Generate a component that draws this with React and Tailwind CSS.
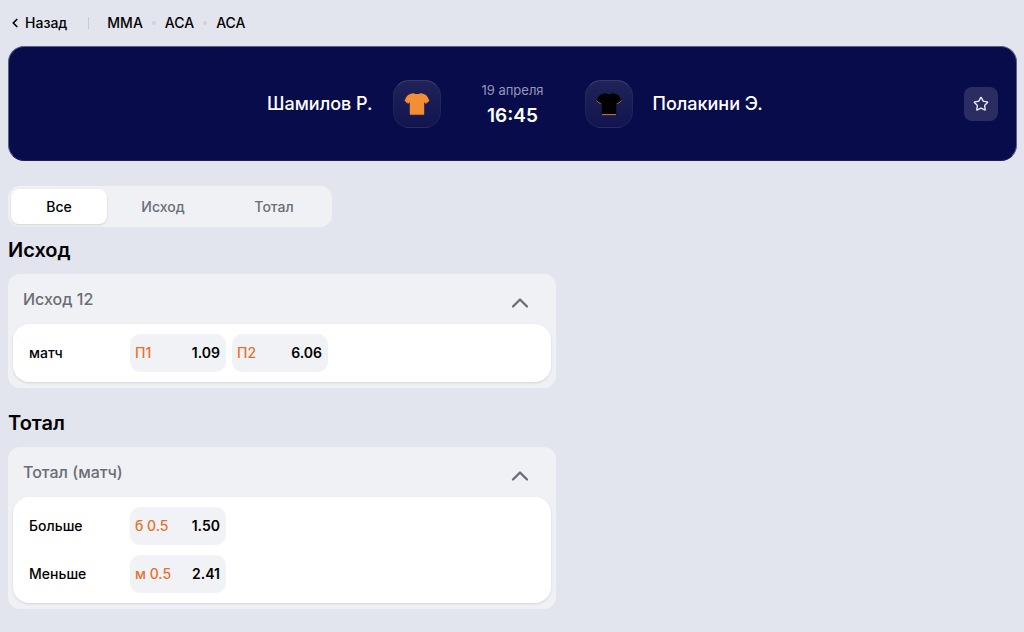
import { useState } from "react";
import { ChevronLeft, ChevronUp, Star } from "lucide-react";

const tabs = ["Все", "Исход", "Тотал"];

const crumbs = ["MMA", "ACA", "ACA"];

const markets = [
  {
    title: "Исход",
    name: "Исход 12",
    rows: [
      {
        label: "матч",
        odds: [
          { name: "П1", value: "1.09" },
          { name: "П2", value: "6.06" },
        ],
      },
    ],
  },
  {
    title: "Тотал",
    name: "Тотал (матч)",
    rows: [
      { label: "Больше", odds: [{ name: "б 0.5", value: "1.50" }] },
      { label: "Меньше", odds: [{ name: "м 0.5", value: "2.41" }] },
    ],
  },
];

function Shirt({ color, trim }) {
  return (
    <div className="flex size-12 shrink-0 items-center justify-center rounded-2xl border border-white/5 border-t-white/15 bg-gradient-to-b from-[#202259] to-[#12144f]">
      <svg viewBox="0 0 26 24" className="h-6 w-[26px]">
        <path
          d="M8.4 1.4C9.4 0.8 10.4 2 13 2C15.6 2 16.6 0.8 17.6 1.4C21.8 2.2 23.6 3.8 25.2 8.4C24.4 9.8 23 10.8 21.4 11.2L20.2 10.2V22.8H5.8V10.2L4.6 11.2C3 10.8 1.6 9.8 0.8 8.4C2.4 3.8 4.2 2.2 8.4 1.4Z"
          fill={color}
        />
        <path
          d="M0.8 8.6C1.6 10 3 11 4.6 11.4M25.2 8.6C24.4 10 23 11 21.4 11.4M6 22.6H20"
          fill="none"
          stroke={trim}
          strokeWidth="1"
        />
      </svg>
    </div>
  );
}

function Breadcrumbs() {
  return (
    <nav className="flex h-[46px] items-center text-sm font-medium text-black">
      <a href="#back" className="flex items-center gap-[3px]">
        <ChevronLeft className="size-3.5" strokeWidth={3} />
        Назад
      </a>
      <span className="mr-[18px] ml-[21px] h-3 w-px bg-[#c9cbd2]" />
      <div className="flex items-center gap-[9px]">
        {crumbs.map((crumb, idx) => (
          <div key={idx} className="flex items-center gap-[9px]">
            {idx > 0 && <span className="size-1 rounded-full bg-[#cfd2d9]" />}
            <a href="#league">{crumb}</a>
          </div>
        ))}
      </div>
    </nav>
  );
}

function MatchHeader() {
  return (
    <header className="grid h-[115px] grid-cols-[1fr_144px_1fr] items-center rounded-2xl border border-[#5d6183] border-b-[#1b1e58] bg-[#090c4b] text-white">
      <div className="flex items-center justify-end gap-5">
        <span className="text-lg font-medium">Шамилов Р.</span>
        <Shirt color="#f28f35" trim="#c46a1c" />
      </div>
      <div className="pt-1 text-center">
        <div className="text-[13px] leading-5 text-[#9496bb]">19 апреля</div>
        <div className="text-[19px] leading-8 font-semibold">16:45</div>
      </div>
      <div className="flex items-center gap-5 pr-[18px]">
        <Shirt color="#000000" trim="#d87a2c" />
        <span className="text-lg font-medium">Полакини Э.</span>
        <button
          aria-label="В избранное"
          className="ml-auto flex size-[34px] items-center justify-center rounded-lg bg-[#2a2c62]"
        >
          <Star className="size-4 text-[#ececf8]" />
        </button>
      </div>
    </header>
  );
}

function Tabs({ active, onChange }) {
  return (
    <div className="grid w-fit grid-cols-[96px_112px_110px] rounded-xl bg-[#eff1f5] p-[3px]">
      {tabs.map((tab) => (
        <button
          key={tab}
          onClick={() => onChange(tab)}
          className={`h-[35px] rounded-lg text-sm font-medium ${
            tab === active
              ? "bg-white text-black shadow-sm"
              : "text-[#6b6d76]"
          }`}
        >
          {tab}
        </button>
      ))}
    </div>
  );
}

function Market({ market }) {
  const [open, setOpen] = useState(true);

  return (
    <section>
      <h2 className="text-xl leading-7 font-semibold text-black">
        {market.title}
      </h2>
      <div className="mt-2.5 rounded-xl bg-[#eff1f5] px-[5px] pb-1.5">
        <button
          onClick={() => setOpen(!open)}
          className="flex h-[50px] w-full items-center justify-between pr-[17px] pl-2.5 text-base font-medium text-[#6b6d76]"
        >
          {market.name}
          <ChevronUp
            className={`mt-2 size-7 ${open ? "" : "rotate-180"}`}
            strokeWidth={2}
          />
        </button>
        {open && (
          <div className="flex flex-col gap-2.5 rounded-2xl bg-white px-4 py-2.5 shadow-sm">
            {market.rows.map((row) => (
              <div key={row.label} className="flex items-center">
                <span className="w-[101px] text-sm font-medium text-black">
                  {row.label}
                </span>
                <div className="flex gap-1.5">
                  {row.odds.map((odd) => (
                    <button
                      key={odd.name}
                      className="flex h-[38px] w-24 items-center justify-between rounded-[10px] bg-[#f1f2f5] pr-1.5 pl-[5px] text-sm font-medium"
                    >
                      <span className="text-[#e8702e]">{odd.name}</span>
                      <span className="font-semibold text-black">
                        {odd.value}
                      </span>
                    </button>
                  ))}
                </div>
              </div>
            ))}
          </div>
        )}
      </div>
    </section>
  );
}

export default function App() {
  const [active, setActive] = useState("Все");
  const shown = markets.filter((m) => active === "Все" || m.title === active);

  return (
    <div className="min-h-screen bg-[#e2e5ed] pr-[7px] pb-5 pl-2 font-[Inter,sans-serif]">
      <Breadcrumbs />
      <MatchHeader />
      <main className="pt-[25px]">
        <Tabs active={active} onChange={setActive} />
        <div className="mt-[9px] flex w-full max-w-[548px] flex-col gap-[21px]">
          {shown.map((market) => (
            <Market key={market.title} market={market} />
          ))}
        </div>
      </main>
    </div>
  );
}
